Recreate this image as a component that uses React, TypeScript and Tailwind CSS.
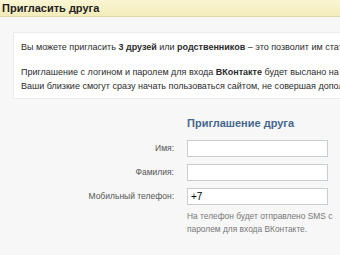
export default function App() {
  return (
    <div className="h-[255px] w-[340px] overflow-hidden bg-[#f7f7f7] text-[9px] leading-[14px] text-[#000]" style={{ fontFamily: '"Liberation Sans", Arial, sans-serif' }}>
      <div className="h-[17px] border-b border-[#e0d9a8] bg-gradient-to-b from-[#fbf6d4] to-[#f3ebb9] pl-[2px] text-[11px] font-bold leading-[17px] text-[#222]">
        Пригласить друга
      </div>

      <div className="ml-[13px] mt-[15px] w-[340px] border border-[#ebebeb] bg-white px-[7px] pb-[5px] pt-[7px] whitespace-nowrap text-[#2b2b2b]">
        <p className="mb-[11px]">
          Вы можете пригласить <b>3 друзей</b> или <b>родственников</b> – это позволит им стать участниками сайта.
        </p>
        <p>
          Приглашение с логином и паролем для входа <b>ВКонтакте</b> будет выслано на телефон.
          <br />
          Ваши близкие смогут сразу начать пользоваться сайтом, не совершая дополнительных действий.
        </p>
      </div>

      <div className="mt-[17px] grid grid-cols-[174px_141px] gap-x-[13px]">
        <div />
        <div className="text-[11px] font-bold leading-[15px] text-[#45688e]">Приглашение друга</div>

        <div className="mt-[9px] h-[17px] text-right text-[8.5px] leading-[17px] text-[#555]">Имя:</div>
        <input className="mt-[9px] h-[17px] border border-[#c8cdd2] bg-white px-[3px] text-[10px] outline-none" />

        <div className="mt-[7px] h-[17px] text-right text-[8.5px] leading-[17px] text-[#555]">Фамилия:</div>
        <input className="mt-[7px] h-[17px] border border-[#c8cdd2] bg-white px-[3px] text-[10px] outline-none" />

        <div className="mt-[7px] h-[17px] text-right text-[8.5px] leading-[17px] text-[#555]">Мобильный телефон:</div>
        <input defaultValue="+7" className="mt-[7px] h-[17px] border border-[#c8cdd2] bg-white px-[3px] text-[10px] text-[#000] outline-none" />

        <div />
        <div className="mt-[5px] w-[150px] text-[8.4px] leading-[13px] text-[#777]">
          На телефон будет отправлено SMS с паролем для входа ВКонтакте.
        </div>
      </div>
    </div>
  );
}
